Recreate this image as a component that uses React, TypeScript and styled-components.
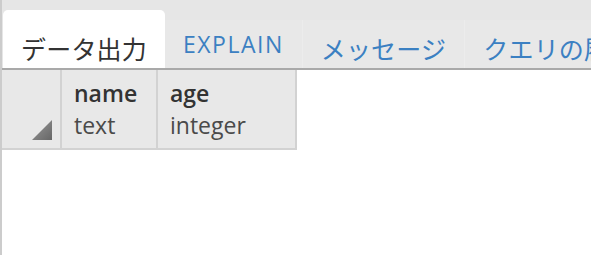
import styled, { createGlobalStyle } from "styled-components";

const GlobalStyle = createGlobalStyle`
  html, body {
    margin: 0;
    padding: 0;
    background: #ffffff;
  }
`;

const Page = styled.div`
  width: 100vw;
  height: 100vh;
  box-sizing: border-box;
  border-left: 2px solid #cccccc;
  background: #ffffff;
  display: flex;
  flex-direction: column;
  overflow: hidden;
`;

const TabBar = styled.div`
  height: 58px;
  padding-top: 10px;
  padding-left: 1px;
  background: #e6e6e6;
  border-bottom: 2px solid #a9a9a9;
  display: flex;
  align-items: flex-end;
  white-space: nowrap;
`;

const Tab = styled.div<{ $active?: boolean; $latin?: boolean }>`
  height: ${(p) => (p.$active ? "58px" : "48px")};
  box-sizing: border-box;
  padding: 0 18px ${(p) => (p.$latin ? "11px" : "7px")};
  display: flex;
  align-items: flex-end;
  flex-shrink: 0;
  background: ${(p) => (p.$active ? "#ffffff" : "#e8e8e8")};
  border-radius: ${(p) => (p.$active ? "5px 5px 0 0" : "0")};
  border-right: ${(p) => (p.$active ? "none" : "1px solid #ececec")};
  color: ${(p) => (p.$active ? "#333333" : "#3b80c2")};
  font-family: ${(p) =>
    p.$latin
      ? `"Open Sans", "Noto Sans CJK JP", sans-serif`
      : `"Noto Sans CJK JP", "Open Sans", sans-serif`};
  font-size: ${(p) => (p.$latin ? "23px" : "25px")};
  letter-spacing: ${(p) => (p.$latin ? "1.5px" : "0.2px")};
  line-height: 25px;
`;

const HeaderRow = styled.div`
  display: flex;
  width: fit-content;
  border-bottom: 2px solid #d2d2d2;
  background: #e8e8e8;
`;

const Cell = styled.div<{ $width: number }>`
  width: ${(p) => p.$width}px;
  height: 78px;
  box-sizing: border-box;
  border-right: 2px solid #d2d2d2;
  padding: 7px 0 0 12px;
  font-family: "Open Sans", sans-serif;
  font-size: 23px;
  line-height: 32px;
`;

const CornerCell = styled.div`
  width: 60px;
  height: 78px;
  box-sizing: border-box;
  border-right: 2px solid #d2d2d2;
  padding: 0 8px 8px 0;
  display: flex;
  align-items: flex-end;
  justify-content: flex-end;
`;

const ColName = styled.div`
  font-weight: 600;
  color: #333333;
`;

const ColType = styled.div`
  color: #4a4a4a;
`;

const Body = styled.div`
  flex: 1;
  background: #ffffff;
`;

const columns = [
  { name: "name", type: "text", width: 96 },
  { name: "age", type: "integer", width: 139 },
];

function SortCorner() {
  return (
    <svg width="20" height="20" viewBox="0 0 20 20">
      <defs>
        <linearGradient id="cornerFill" x1="0" y1="0" x2="1" y2="1">
          <stop offset="0" stopColor="#9a9a9a" />
          <stop offset="1" stopColor="#666666" />
        </linearGradient>
      </defs>
      <polygon points="20,0 20,20 0,20" fill="url(#cornerFill)" />
    </svg>
  );
}

export default function App() {
  return (
    <>
      <GlobalStyle />
      <Page>
        <TabBar>
          <Tab $active>データ出力</Tab>
          <Tab $latin>EXPLAIN</Tab>
          <Tab>メッセージ</Tab>
          <Tab>クエリの履歴</Tab>
        </TabBar>
        <HeaderRow>
          <CornerCell>
            <SortCorner />
          </CornerCell>
          {columns.map((c) => (
            <Cell key={c.name} $width={c.width}>
              <ColName>{c.name}</ColName>
              <ColType>{c.type}</ColType>
            </Cell>
          ))}
        </HeaderRow>
        <Body />
      </Page>
    </>
  );
}
